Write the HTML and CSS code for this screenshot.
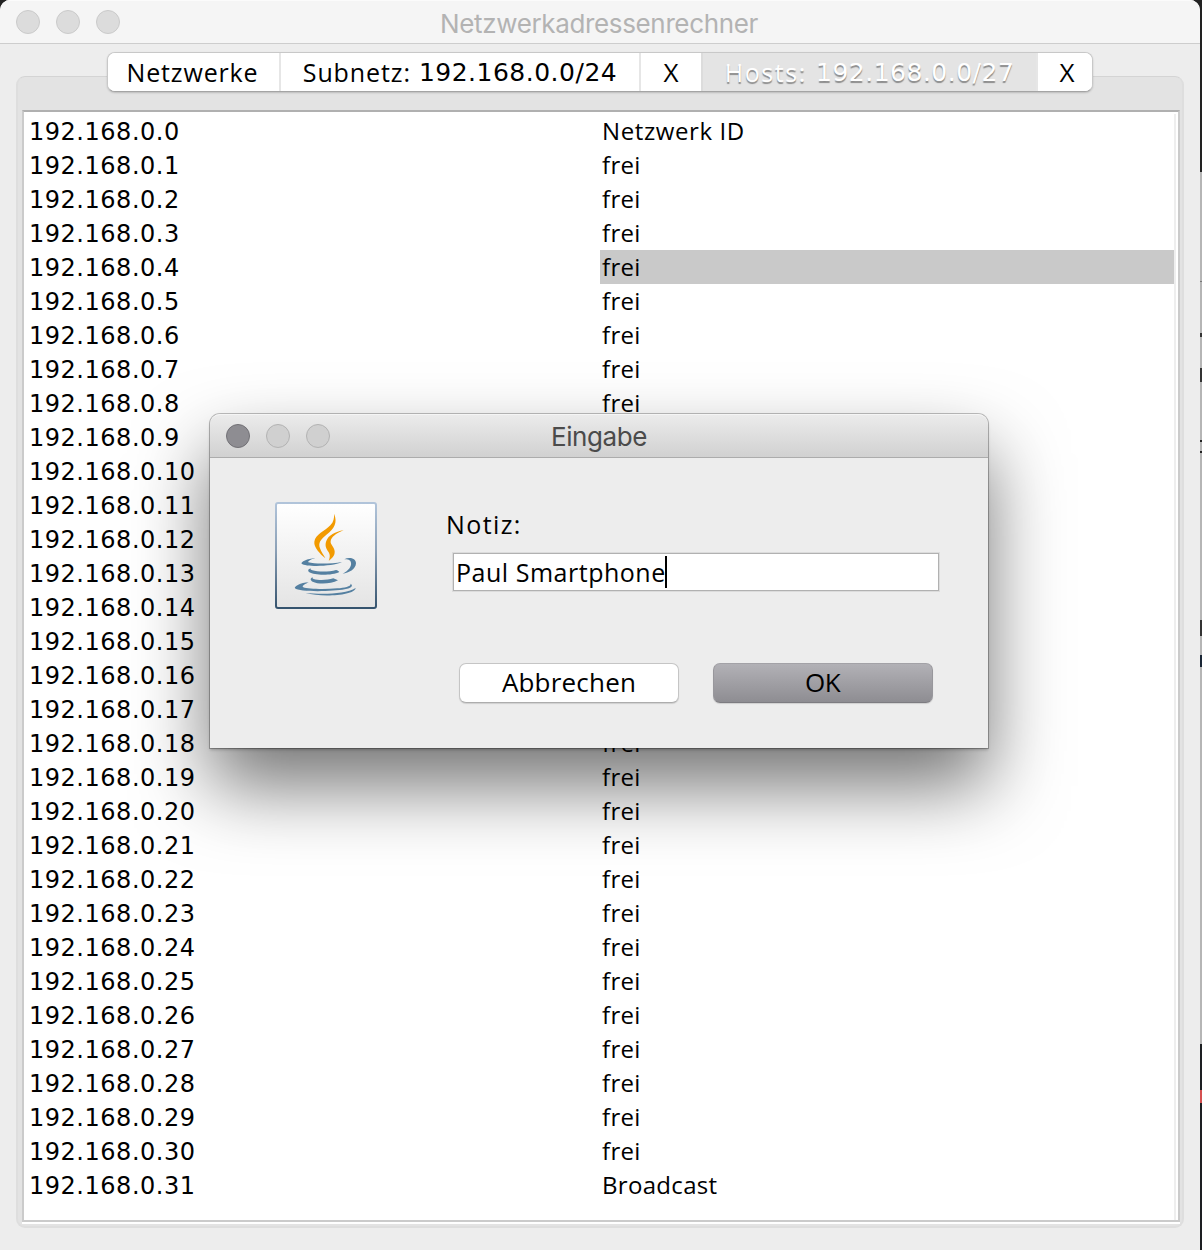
FILE: index.html
```html
<!DOCTYPE html>
<html lang="de">
<head>
<meta charset="utf-8">
<title>Netzwerkadressenrechner</title>
<link rel="stylesheet" href="styles.css">
</head>
<body>
<main class="window">
  <header class="titlebar">
    <div class="lights"><i></i><i></i><i></i></div>
    <h1>Netzwerkadressenrechner</h1>
  </header>
  <section class="content">
    <nav class="tabs">
      <button class="tab tab-networks">Netzwerke</button>
      <button class="tab tab-subnet"><span>Subnetz:</span><span class="num">192.168.0.0/24</span></button>
      <button class="tab tab-close">X</button>
      <button class="tab tab-hosts active"><span>Hosts:</span><span class="num">192.168.0.0/27</span></button>
      <button class="tab tab-last">X</button>
    </nav>
    <div class="panel">
      <div class="table-frame"><div class="table" id="hosts"></div></div>
    </div>
  </section>
</main>
<section class="dialog">
  <header class="dialog-title">
    <div class="lights"><i class="enabled"></i><i></i><i></i></div>
    <h2>Eingabe</h2>
  </header>
  <div class="dialog-body">
    <svg class="java" viewBox="45 36 306 321" width="102" height="107">
      <defs>
        <linearGradient id="edge" x1="0" y1="0" x2="0" y2="1"><stop stop-color="#b1c4da"/><stop offset=".45" stop-color="#8ba0b6"/><stop offset="1" stop-color="#35536e"/></linearGradient>
        <linearGradient id="face" x1="0" y1="0" x2="0" y2="1"><stop stop-color="#fff"/><stop offset="1" stop-color="#e4e4e4"/></linearGradient>
      </defs>
      <rect x="48" y="39" width="300" height="315" rx="6" fill="url(#face)" stroke="url(#edge)" stroke-width="6"/>
      <g fill="#f29a00">
        <path d="M222 71C234 98 222 116 201 133C181 149 174 160 180 175C184 187 191 195 196 205C180 191 161 172 163 155C166 132 195 124 211 106C221 95 223 84 222 71Z"/>
        <path d="M251 121C226 131 214 142 212 153C210 163 223 171 224 184C225 198 215 206 206 213C210 201 211 194 205 185C198 175 194 166 199 153C205 136 226 125 251 121Z"/>
      </g>
      <g fill="#5580a1">
        <path d="M166 205C142 205 121 217 125 221C137 231 217 230 246 216C218 221 166 223 145 217C143 213 153 208 166 205Z"/>
        <path d="M253 208C267 200 288 205 288 220C287 238 267 249 248 251C266 241 275 229 273 218C271 209 263 208 253 208Z"/>
        <path d="M153 235C143 238 143 243 148 247C164 257 217 257 238 246C235 243 233 241 228 240C208 246 174 246 157 241C151 239 150 238 153 235Z"/>
        <path d="M159 261C149 266 151 271 158 275C176 284 213 282 234 271L220 265C202 271 176 272 161 267C157 265 156 263 159 261Z"/>
        <path d="M146 277C122 278 101 290 105 295C117 307 218 305 254 298C276 294 280 286 272 281C273 290 253 293 232 295C193 299 143 297 130 292C123 288 138 281 146 277Z"/>
        <path d="M287 294C284 317 184 323 137 309C181 313 256 314 287 294Z"/>
      </g>
    </svg>
    <form class="form">
      <label for="note">Notiz:</label>
      <div class="field" id="note"><span>Paul Smartphone</span><b class="caret"></b></div>
      <div class="actions">
        <button type="button" class="btn">Abbrechen</button>
        <button type="button" class="btn primary">OK</button>
      </div>
    </form>
  </div>
</section>
<script src="hosts.js"></script>
</body>
</html>
```
FILE: styles.css
```css
* { box-sizing: border-box; }
body {
  margin: 0; width: 1202px; height: 1250px; overflow: hidden; position: relative;
  font-family: "Open Sans", "Noto Sans", sans-serif; color: #000;
  background: linear-gradient(#222 0 172px, #b5b5b5 172px 281px, #777 281px 282px, #b5b5b5 282px 333px, #333 333px 337px, #b5b5b5 337px 368px, #333 368px 382px, #b5b5b5 382px 440px, #222 440px 442px, #b5b5b5 442px 451px, #222 451px 453px, #b5b5b5 453px 620px, #333 620px 636px, #b5b5b5 636px 655px, #192535 655px 667px, #b5b5b5 667px 1044px, #1d1f22 1044px 1090px, #d45050 1090px 1103px, #1d1f22 1103px);
}
h1, h2 { margin: 0; font-family: Inter, sans-serif; font-weight: 400; flex: 1; text-align: center; }
button { font: inherit; color: inherit; border: 0; margin: 0; padding: 0; }
.window { width: 1200px; height: 1250px; background: #ededed; border-radius: 10px 10px 0 0; overflow: hidden; }
.titlebar { height: 44px; display: flex; align-items: center; background: #f5f5f5; border-top: 1px solid #fbfbfb; border-bottom: 1px solid #cdcdcd; }
.titlebar h1 { font-size: 26px; letter-spacing: -.36px; color: #b3b3b3; line-height: 42px; padding: 2px 2px 0 0; height: 42px; }
.lights { display: flex; gap: 16px; padding-left: 16px; width: 120px; margin-right: -120px; }
.lights i { width: 24px; height: 24px; border-radius: 50%; background: #dcdcdc; border: 1px solid #cacaca; }

.content { padding: 8px 16px 0; display: flex; flex-direction: column; }
.tabs { display: flex; width: 986px; height: 40px; align-self: center; z-index: 1; border-radius: 8px; background: #fff; border: 1px solid #c8c8c8; border-bottom-color: #a4a4a4; box-shadow: 0 1px 2px rgba(0,0,0,.18); overflow: hidden; font-size: 25px; }
.tab { background: #fff; display: flex; justify-content: center; align-items: center; border-left: 2px solid #e6e6e6; white-space: pre; line-height: 38px; }
.tab:first-child { border-left: 0; }
.tab-networks { width: 171px; letter-spacing: .85px; padding-right: 2px; }
.tab-subnet { width: 360px; gap: 8px; letter-spacing: .9px; }
.tab-close { width: 62px; font-size: 26px; }
.tab-hosts { width: 335px; gap: 9px; letter-spacing: 1.6px; }
.tab-last { flex: 1; padding-left: 4px; font-size: 26px; }
.tab .num { font-size: 25px; letter-spacing: .5px; padding-top: 1px; }
.active { background: #e4e4e4; color: #fff; text-shadow: 0 2px 1px #8c8c8c; border-left-color: #dcdcdc; }
.num { font-family: "DejaVu Sans", sans-serif; }

.panel { margin-top: -16px; width: 1168px; height: 1152px; border: 2px solid #dedede; border-top-color: #d4d4d4; border-top-width: 1px; border-radius: 9px; background: #e3e3e3; padding: 33px 2px 0 4px; }
.table-frame { height: 1114px; border-bottom: 2px solid #fff; }
.table { height: 1112px; background: linear-gradient(#eee 0 0) right 2px top 2px / 2px 100% no-repeat #fff; border: 2px solid #cbcbcb; border-top-color: #b0b0b0; padding: 2px 4px 0 0; }
.row { display: grid; grid-template-columns: 576px 574px; height: 34px; line-height: 34px; }
.ip { font-size: 24px; letter-spacing: .52px; padding: 1px 0 0 5px; height: 34px; }
.note { font-size: 24px; letter-spacing: .32px; padding-left: 2px; }
.row:first-child .note { letter-spacing: .6px; }
.note.selected { background: #c9c9c9; }

.dialog { position: absolute; left: 210px; top: 414px; width: 778px; height: 334px; border-radius: 10px 10px 0 0; background: #ededed; box-shadow: 0 0 0 1px rgba(0,0,0,.24), 0 2px 3px rgba(0,0,0,.22), 0 38px 76px rgba(0,0,0,.55); }
.dialog-title { height: 44px; display: flex; align-items: center; border-radius: 10px 10px 0 0; background: linear-gradient(#ebebeb, #d1d1d1); border-top: 1px solid #f5f5f5; border-bottom: 1px solid #acacac; }
.dialog-title h2 { font-size: 26px; letter-spacing: -.4px; color: #4b4b4b; line-height: 42px; height: 42px; padding-top: 1px; }
.dialog-title .lights i { background: #d0d0d0; border-color: #b3b3b3; }
.dialog-title .lights .enabled { background: #8e8d92; border-color: #727176; }
.dialog-body { display: flex; padding: 44px 0 0 65px; }
.java { flex: none; }
.form { margin-left: 69px; padding-top: 6px; width: 494px; font-size: 25px; }
.form label { display: block; height: 32px; line-height: 32px; letter-spacing: 1.4px; }
.field { margin: 13px 0 0 7px; height: 38px; width: 486px; display: flex; align-items: center; background: #fff; border: 1px solid #b1b1b1; box-shadow: 0 0 0 1px #dcdcdc; padding-left: 2px; letter-spacing: .52px; line-height: 36px; }
.caret { width: 2px; height: 32px; background: #000; margin-left: -1px; }
.actions { display: flex; gap: 34px; margin: 72px 0 0 13px; }
.btn { width: 220px; height: 40px; border-radius: 7px; background: #fff; border: 1px solid #c5c5c5; border-bottom-color: #adadad; box-shadow: 0 1px 1px rgba(0,0,0,.13); font-size: 26px; line-height: 36px; padding-bottom: 2px; letter-spacing: .2px; }
.primary { background: linear-gradient(#b2b1b6, #8e8d92); border-color: #a3a2a7 #98979c #7d7c81; letter-spacing: -.5px; padding-right: 1px; }
```
FILE: hosts.js
```js
const table = document.getElementById("hosts");
for (let i = 0; i < 32; i++) {
  const row = document.createElement("div");
  row.className = "row";
  const ip = document.createElement("span");
  ip.className = "ip num";
  ip.textContent = "192.168.0." + i;
  const note = document.createElement("span");
  note.className = i === 4 ? "note selected" : "note";
  note.textContent = i === 0 ? "Netzwerk ID" : i === 31 ? "Broadcast" : "frei";
  row.append(ip, note);
  table.append(row);
}
```
